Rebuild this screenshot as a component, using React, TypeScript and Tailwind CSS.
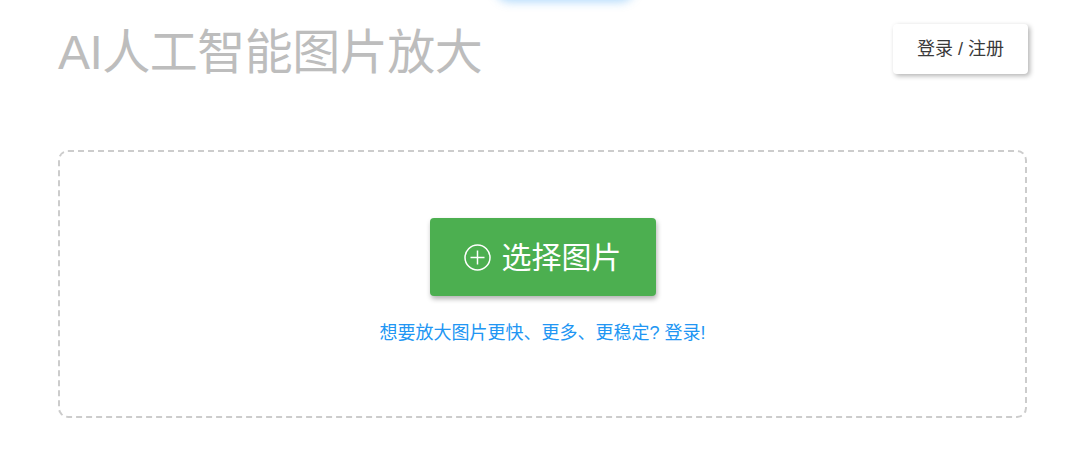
import React from "react";

export default function App() {
  return (
    <div
      className="relative w-[1080px] h-[454px] bg-white overflow-hidden"
      style={{ fontFamily: '"Liberation Sans", "Noto Sans CJK SC", sans-serif' }}
    >
      <div className="absolute left-[495px] top-[-30px] w-[140px] h-[30px] rounded-full shadow-[0_2px_10px_rgba(33,150,243,0.35)]" />
      <div className="pl-[58px] pr-[52px] pt-[24px]">
        <div className="flex h-[50px] items-start justify-between">
          <h1 className="mt-[5px] text-[48px] leading-[48px] text-[#bdbdbd] tracking-[-0.5px]">AI人工智能图片放大</h1>
          <button className="w-[135px] h-[50px] bg-white rounded-[4px] shadow-[2px_2px_5px_rgba(0,0,0,0.3)] text-[18px] text-[#3a3a3a]">
            登录 / 注册
          </button>
        </div>
        <div className="mt-[76px] h-[268px] w-[969px] border-2 border-dashed border-[#cccccc] rounded-[10px] flex flex-col items-center pt-[66px]">
          <button className="w-[226px] h-[78px] bg-[#4caf50] rounded-[4px] shadow-[1px_3px_5px_rgba(0,0,0,0.3)] flex items-center justify-center gap-[11px] text-white text-[30px]">
            <svg width="27" height="27" viewBox="0 0 27 27" fill="none" stroke="white" strokeWidth="1.5">
              <circle cx="13.5" cy="13.5" r="12.5" />
              <line x1="13.5" y1="6.5" x2="13.5" y2="20.5" />
              <line x1="6.5" y1="13.5" x2="20.5" y2="13.5" />
            </svg>
            <span>选择图片</span>
          </button>
          <div className="mt-[25px] text-[18px] leading-[24px] text-[#2196f3]">想要放大图片更快、更多、更稳定? 登录!</div>
        </div>
      </div>
    </div>
  );
}
